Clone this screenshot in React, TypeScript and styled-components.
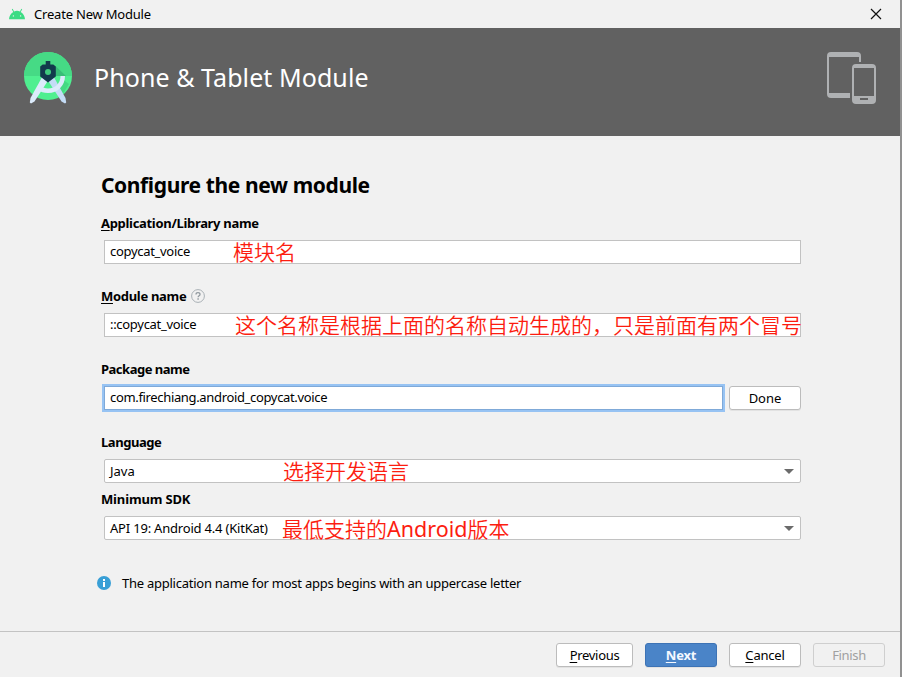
import React from 'react';
import styled, { createGlobalStyle } from 'styled-components';

const Global = createGlobalStyle`
  * { box-sizing: border-box; }
  body { margin: 0; background: #f1f1f1; overflow: hidden; }
`;

const Dialog = styled.div`
  width: 902px;
  height: 677px;
  display: flex;
  flex-direction: column;
  background: #f1f1f1;
  border-right: 2px solid #919191;
  font: 13px/20px 'Noto Sans', 'Noto Sans CJK SC', sans-serif;
  color: #000;
  white-space: nowrap;
`;

const TitleBar = styled.div`
  height: 28px;
  flex: none;
  display: flex;
  align-items: center;
  padding: 0 18px 0 9px;
`;

const TitleIcon = styled.svg`
  flex: none;
`;

const TitleText = styled.span`
  flex: 1;
  margin-left: 9px;
  padding-bottom: 1px;
  letter-spacing: -0.2px;
`;

const Banner = styled.header`
  height: 108px;
  flex: none;
  display: flex;
  align-items: flex-start;
  padding: 22px 23px 0 22px;
  background: #616161;
`;

const BannerTitle = styled.h1`
  flex: 1;
  margin: 9px 0 0 19px;
  font-size: 25px;
  line-height: 36px;
  font-weight: 400;
  letter-spacing: 0.07px;
  color: #fff;
`;

const Content = styled.main`
  flex: 1;
  padding: 33px 99px 0 101px;
`;

const Heading = styled.h2`
  margin: 0 0 11px;
  font-size: 21px;
  line-height: 32px;
  letter-spacing: -0.38px;
  font-weight: 700;
`;

const Field = styled.div<{ $gap?: number }>`
  margin-bottom: ${(p) => p.$gap ?? 21}px;
`;

const Label = styled.label<{ $track: number }>`
  height: 22px;
  margin: 0 0 6px -1px;
  padding-left: 1px;
  display: flex;
  align-items: center;
  font-weight: 700;
  letter-spacing: ${(p) => p.$track}px;
`;

const Mnemonic = styled.span`
  text-decoration: underline;
  text-decoration-thickness: 1px;
  text-underline-offset: 2px;
  text-decoration-skip-ink: none;
`;

const ControlRow = styled.div`
  display: flex;
  gap: 6px;
  padding-left: 3px;
`;

const Control = styled.div<{ $track: number; $focused?: boolean; $combo?: boolean }>`
  position: relative;
  flex: 1;
  height: 24px;
  display: flex;
  align-items: center;
  padding: 0 6px ${(p) => (p.$combo ? 0 : 2)}px 5px;
  background: #fff;
  border: 1px solid ${(p) => (p.$focused ? '#7fa9d8' : '#c2c2c2')};
  border-radius: ${(p) => (p.$combo ? 2 : 0)}px;
  box-shadow: ${(p) => (p.$focused ? '0 0 0 2px #97c3f3' : 'none')};
  letter-spacing: ${(p) => p.$track}px;
`;

const Note = styled.span<{ $x: number; $y?: number }>`
  position: absolute;
  left: ${(p) => p.$x}px;
  top: ${(p) => p.$y ?? -3}px;
  font: 350 21px/28px 'Noto Sans', 'Noto Sans CJK SC', sans-serif;
  letter-spacing: 0;
  color: #fc1d10;
`;

const LatinNote = styled.span`
  font-size: 21.5px;
  font-weight: 400;
`;

const Arrow = styled.span`
  margin-left: auto;
  border: 5px solid transparent;
  border-top-color: #6b6b6b;
  border-bottom-width: 0;
`;

const Info = styled.div`
  display: flex;
  align-items: center;
  gap: 11px;
  margin: 33px 0 0 -4px;
  letter-spacing: -0.25px;
`;

const Footer = styled.footer`
  height: 46px;
  flex: none;
  display: flex;
  justify-content: flex-end;
  gap: 12px;
  padding: 11px 15px 0 0;
  border-top: 1px solid #c3c3c3;
`;

const Button = styled.button<{ $kind?: 'primary' | 'disabled'; $w?: number; $track?: number }>`
  width: ${(p) => p.$w ?? 72}px;
  height: 24px;
  flex: none;
  padding: 0 0 1px;
  font: inherit;
  line-height: 20px;
  letter-spacing: ${(p) => p.$track ?? 0}px;
  font-weight: ${(p) => (p.$kind === 'primary' ? 700 : 400)};
  color: ${(p) => (p.$kind === 'primary' ? '#f4f8ff' : p.$kind === 'disabled' ? '#a0a0a0' : '#000')};
  background: ${(p) => (p.$kind === 'primary' ? '#4a84c8' : p.$kind === 'disabled' ? '#f1f1f1' : '#fff')};
  border: 1px solid ${(p) => (p.$kind === 'primary' ? '#3d73b5' : p.$kind === 'disabled' ? '#cfcfcf' : '#bcbcbc')};
  border-radius: 3px;
  box-shadow: ${(p) => (p.$kind === 'disabled' ? 'none' : '0 1px 0 #e2e2e2')};
`;

const HelpIcon = styled.svg`
  margin-left: 5px;
`;

const AndroidHead = () => (
  <TitleIcon width="16" height="12" viewBox="0 0 16 12">
    <path d="M0 11.2C.2 8 1.8 5.4 4.3 3.900L2.800 1.300l.8-.5 1.500 2.600a8 8 0 0 1 5.800 0L12.400.8l.8.5-1.500 2.600C14.200 5.400 15.800 8 16 11.200Z" fill="#3ddc84" />
    <circle cx="4.4" cy="7.9" r=".7" fill="#f1f1f1" />
    <circle cx="11.6" cy="7.9" r=".7" fill="#f1f1f1" />
  </TitleIcon>
);

const StudioLogo = () => (
  <svg width="53" height="56" viewBox="22 50 53 56">
    <circle cx="48" cy="76" r="24" fill="#4fef90" />
    <path d="M24 76a24 24 0 0 1 48 0Z" fill="#46da85" />
    <path d="M55.500 66 66 76H52Z" fill="#38bd77" />
    <path d="m62 79 7 5-6 10-8-5Z" fill="#42d07d" opacity=".7" />
    <path d="M43.300 75 48.700 79.500 34.500 101.500 31 103.400 29.800 102.500 30.500 98Z" fill="#dcebfb" />
    <path d="M52.700 75 47.300 79.500 61.500 101.500 65 103.400 66.200 102.500 65.500 98Z" fill="#c4dcf6" />
    <path d="M60.500 76h4.500c0 9.500-7 17-17 17-4.200 0-7.500-1-10-3l2.500-4c2 1.500 4.500 2.500 7.500 2.500 7.500 0 12.500-5.500 12.500-12.500Z" fill="#dcebfb" />
    <path d="M45.700 61h4.600v3.500h3l2.500 2v10L48 82.500 40.200 76.500v-10l2.500-2h3Z" fill="#123a4c" />
    <circle cx="48" cy="72" r="3" fill="#3fcb7d" />
  </svg>
);

const DevicesIcon = () => (
  <svg width="50" height="54" viewBox="827 50 50 54" fillRule="evenodd" fill="#afb1b3">
    <path d="M831 52h26a4 4 0 0 1 4 4v6h-2v-5h-30v36h21v5h-19a4 4 0 0 1-4-4V56a4 4 0 0 1 4-4Z" />
    <path d="M856 64h16a4 4 0 0 1 4 4v32a4 4 0 0 1-4 4h-16a4 4 0 0 1-4-4V68a4 4 0 0 1 4-4Zm-2 4v28h20V68Zm6 30v2h8v-2Z" />
  </svg>
);

export default function App() {
  return (
    <>
      <Global />
      <Dialog>
        <TitleBar>
          <AndroidHead />
          <TitleText>Create New Module</TitleText>
          <svg width="12" height="12" viewBox="0 0 12 12">
            <path d="M1 1 11 11M11 1 1 11" stroke="#111" strokeWidth="1.200" />
          </svg>
        </TitleBar>
        <Banner>
          <StudioLogo />
          <BannerTitle>Phone &amp; Tablet Module</BannerTitle>
          <DevicesIcon />
        </Banner>
        <Content>
          <Heading>Configure the new module</Heading>
          <Field>
            <Label $track={-0.31}>
              <span><Mnemonic>A</Mnemonic>pplication/Library name</span>
            </Label>
            <ControlRow>
              <Control $track={-0.3}>
                copycat_voice
                <Note $x={128}>模块名</Note>
              </Control>
            </ControlRow>
          </Field>
          <Field>
            <Label $track={-0.3}>
              <span><Mnemonic>M</Mnemonic>odule name</span>
              <HelpIcon width="14" height="14" viewBox="0 0 14 14" fill="none">
                <circle cx="7" cy="7" r="6.400" stroke="#a9b0b5" />
                <path d="M5 5.500C5 4.300 5.800 3.700 7 3.700s2 .7 2 1.700c0 1.400-1.900 1.400-1.900 2.900" stroke="#929aa0" strokeWidth="1.300" />
                <path d="M6.400 9.300h1.400v1.400H6.400z" fill="#929aa0" />
              </HelpIcon>
            </Label>
            <ControlRow>
              <Control $track={-0.3}>
                ::copycat_voice
                <Note $x={130}>这个名称是根据上面的名称自动生成的，只是前面有两个冒号</Note>
              </Control>
            </ControlRow>
          </Field>
          <Field>
            <Label $track={-0.5}>Package name</Label>
            <ControlRow>
              <Control $track={-0.34} $focused>com.firechiang.android_copycat.voice</Control>
              <Button>Done</Button>
            </ControlRow>
          </Field>
          <Field $gap={5}>
            <Label $track={-0.45}>Language</Label>
            <ControlRow>
              <Control $track={0} $combo>
                Java
                <Note $x={178}>选择开发语言</Note>
                <Arrow />
              </Control>
            </ControlRow>
          </Field>
          <Field>
            <Label $track={-0.15}>Minimum SDK</Label>
            <ControlRow>
              <Control $track={-0.2} $combo>
                API 19: Android 4.4 (KitKat)
                <Note $x={177} $y={-2}>最低支持的<LatinNote>Android</LatinNote>版本</Note>
                <Arrow />
              </Control>
            </ControlRow>
          </Field>
          <Info>
            <svg width="14" height="14" viewBox="0 0 14 14">
              <circle cx="7" cy="7" r="7" fill="#389fd6" />
              <path d="M6 3h2v2H6zM6 6h2v5H6z" fill="#fff" />
            </svg>
            <span>The application name for most apps begins with an uppercase letter</span>
          </Info>
        </Content>
        <Footer>
          <Button $w={77} $track={-0.3}><Mnemonic>P</Mnemonic>revious</Button>
          <Button $kind="primary" $track={-0.2}><Mnemonic>N</Mnemonic>ext</Button>
          <Button $track={-0.2}><Mnemonic>C</Mnemonic>ancel</Button>
          <Button $kind="disabled" $track={-0.35}>Finish</Button>
        </Footer>
      </Dialog>
    </>
  );
}
